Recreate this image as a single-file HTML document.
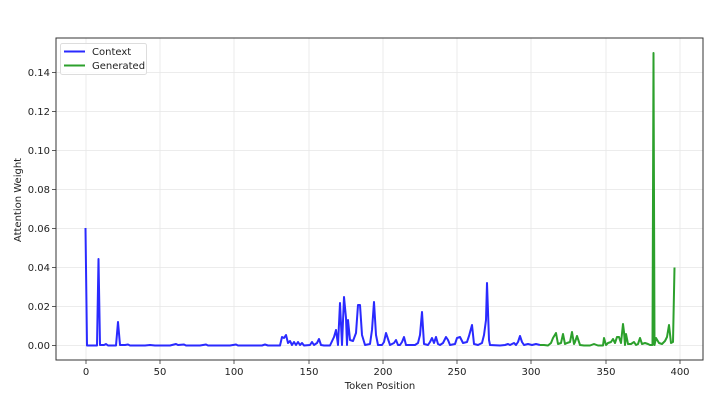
<!DOCTYPE html>
<html><head><meta charset="utf-8"><style>
html,body{margin:0;padding:0;background:#fff;width:718px;height:417px;overflow:hidden}
text{font-family:"DejaVu Sans","Liberation Sans",sans-serif;font-size:10px;fill:#222}
</style></head><body>
<svg width="718" height="417" viewBox="0 0 718 417" xmlns="http://www.w3.org/2000/svg">
<rect width="718" height="417" fill="#fff"/>
<g stroke="#e6e6e6" stroke-width="0.8">
<line x1="86" y1="38" x2="86" y2="360"/><line x1="160" y1="38" x2="160" y2="360"/><line x1="234" y1="38" x2="234" y2="360"/><line x1="309" y1="38" x2="309" y2="360"/><line x1="383" y1="38" x2="383" y2="360"/><line x1="457" y1="38" x2="457" y2="360"/><line x1="531" y1="38" x2="531" y2="360"/><line x1="606" y1="38" x2="606" y2="360"/><line x1="680" y1="38" x2="680" y2="360"/>
<line x1="56" y1="345.5" x2="703" y2="345.5"/><line x1="56" y1="306.5" x2="703" y2="306.5"/><line x1="56" y1="267.5" x2="703" y2="267.5"/><line x1="56" y1="228.5" x2="703" y2="228.5"/><line x1="56" y1="189.5" x2="703" y2="189.5"/><line x1="56" y1="150.5" x2="703" y2="150.5"/><line x1="56" y1="111.5" x2="703" y2="111.5"/><line x1="56" y1="72.5" x2="703" y2="72.5"/>
</g>
<polyline fill="none" stroke="#2a2aff" stroke-width="2" stroke-linejoin="round" points="85.5,228 87,345.5 97,345.5 98.5,259 100,345 104,345 106,344 108,345.5 116,345.5 118,322 120,345 125,345 128,344.5 130,345.5 145,345.5 150,345 155,345.5 170,345.5 176,344 178,345 184,344.5 186,345.5 200,345.5 206,344.5 208,345.5 230,345.5 236,344.5 238,345.5 262,345.5 265,344.5 268,345.5 280,345.5 282,337 284,338 286,335 288,343 290,341 292,345 294,342 296,345 298,342 300,345 302,343 304,345.5 310,345 312,342 314,345 317,343 319,339 321,345 324,345.5 330,345.5 334,337 336,330 338,345 340,303 342,345 344,297 346,318 347,345 348,320 350,340 353,341 356,333 358,305 360,305 362,335 365,345 370,344 372,330 374,302 376,335 378,345 382,345 384,342 386,333 388,339 390,345 394,343 396,340 398,345 400,345 402,342 404,337 406,345 410,345 415,345 418,343 420,335 422,312 424,344 428,345 430,342 432,338 434,343 436,337 438,344 440,345 443,343 446,337 448,340 450,345 455,344 457,338 460,337 463,343 467,342 469,336 472,325 474,344 478,345 482,343 484,335 486,320 487,283 489,340 490,345 500,345.5 505,345 508,344 510,345 514,343 516,345 518,342 520,336 522,342 524,345 528,344 532,345 536,344 540,345"/>
<polyline fill="none" stroke="#2ca02c" stroke-width="2" stroke-linejoin="round" points="540,345 544,345 548,345.5 551,343 553,338 556,333 558,344 561,343 563,334 565,344 567,343 570,342 572,332 574,344 575,342 577,336 580,345 584,345.5 590,345.5 594,344 598,345.5 603,345.5 604,338 606,345 608,343 611,342 613,339 615,343 617,337 619,337 621,343 623,324 624,332 625,345 626,334 628,344 631,344 634,342 636,345 638,344 640,338 642,344 645,343 648,344 650,345 652.5,345 653.5,53 654.5,345 656,338 659,343 662,344 665,341 667,337 669,325 671,343 673,342 674.5,267.5"/>
<rect x="56" y="38" width="647" height="322" fill="none" stroke="#333" stroke-width="1"/>
<g stroke="#333" stroke-width="0.8">
<line x1="86" y1="360" x2="86" y2="364"/><line x1="160" y1="360" x2="160" y2="364"/><line x1="234" y1="360" x2="234" y2="364"/><line x1="309" y1="360" x2="309" y2="364"/><line x1="383" y1="360" x2="383" y2="364"/><line x1="457" y1="360" x2="457" y2="364"/><line x1="531" y1="360" x2="531" y2="364"/><line x1="606" y1="360" x2="606" y2="364"/><line x1="680" y1="360" x2="680" y2="364"/>
<line x1="52" y1="345.5" x2="56" y2="345.5"/><line x1="52" y1="306.5" x2="56" y2="306.5"/><line x1="52" y1="267.5" x2="56" y2="267.5"/><line x1="52" y1="228.5" x2="56" y2="228.5"/><line x1="52" y1="189.5" x2="56" y2="189.5"/><line x1="52" y1="150.5" x2="56" y2="150.5"/><line x1="52" y1="111.5" x2="56" y2="111.5"/><line x1="52" y1="72.5" x2="56" y2="72.5"/>
</g>
<g text-anchor="middle">
<text x="86" y="375">0</text><text x="160" y="375">50</text><text x="234" y="375">100</text><text x="309" y="375">150</text><text x="383" y="375">200</text><text x="457" y="375">250</text><text x="531" y="375">300</text><text x="606" y="375">350</text><text x="680" y="375">400</text>
<text x="380" y="389">Token Position</text>
<text transform="translate(21,200) rotate(-90)">Attention Weight</text>
</g>
<g text-anchor="end">
<text x="50" y="349">0.00</text><text x="50" y="310">0.02</text><text x="50" y="271">0.04</text><text x="50" y="232">0.06</text><text x="50" y="193">0.08</text><text x="50" y="154">0.10</text><text x="50" y="115">0.12</text><text x="50" y="76">0.14</text>
</g>
<rect x="60.5" y="43.5" width="86" height="31" rx="2" fill="#fff" fill-opacity="0.85" stroke="#ddd"/>
<line x1="64" y1="51.5" x2="85" y2="51.5" stroke="#2a2aff" stroke-width="2"/>
<line x1="64" y1="65.5" x2="85" y2="65.5" stroke="#2ca02c" stroke-width="2"/>
<text x="92" y="55">Context</text>
<text x="92" y="69">Generated</text>
</svg>
</body></html>
